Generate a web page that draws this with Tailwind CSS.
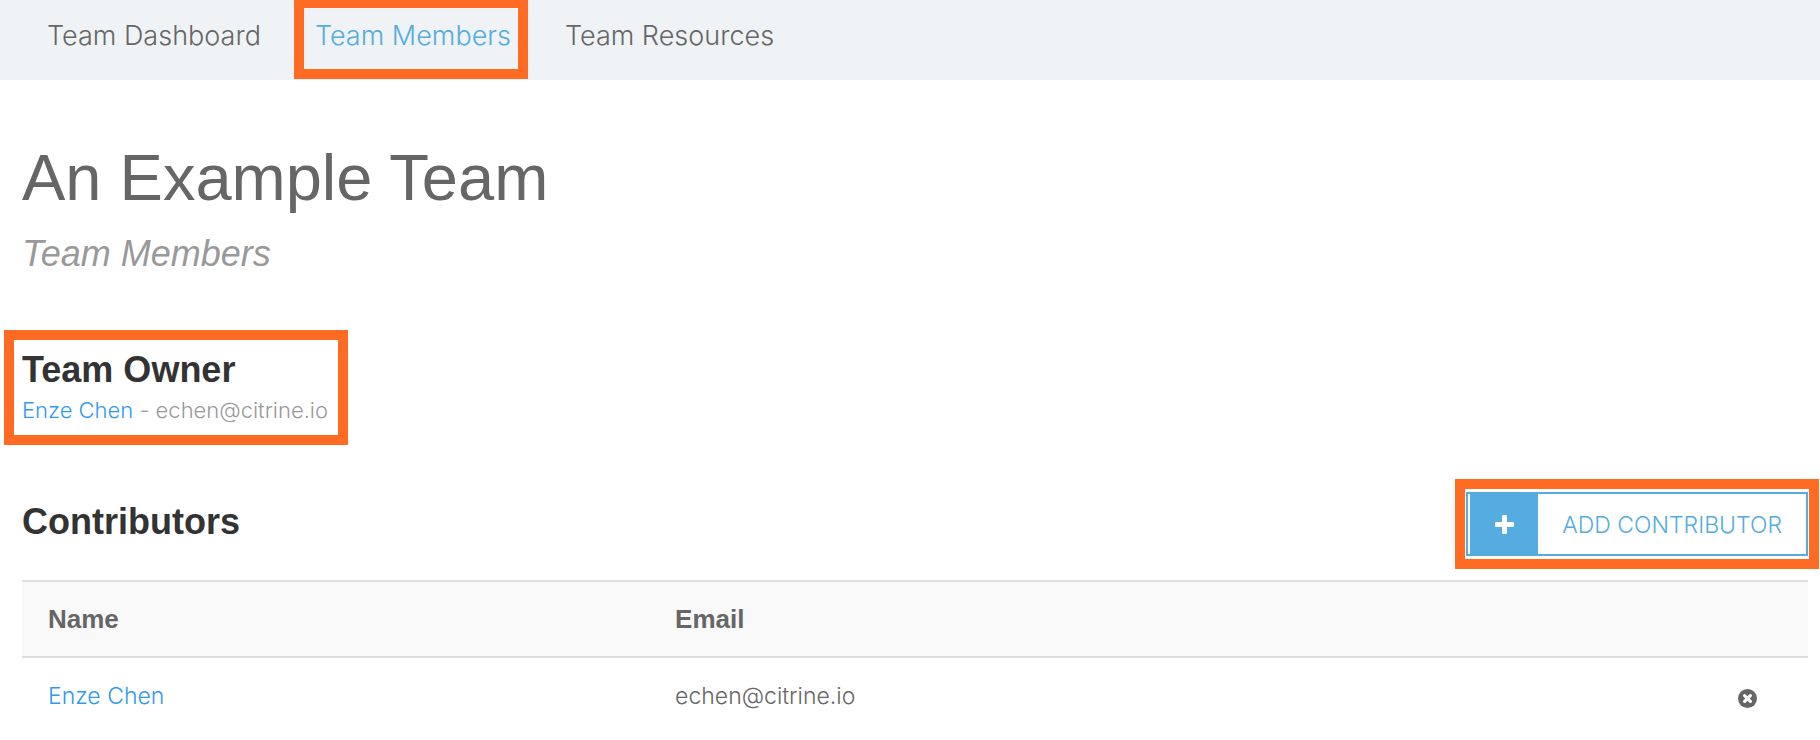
<!DOCTYPE html>
<html lang="en">
<head>
<meta charset="utf-8">
<meta name="viewport" content="width=device-width, initial-scale=1">
<title>An Example Team - Team Members</title>
<script src="https://cdn.jsdelivr.net/npm/@tailwindcss/browser@4"></script>
</head>
<body class="bg-white font-['Liberation_Sans',Arial,sans-serif] text-[#666] overflow-x-hidden">
<nav class="flex gap-[54px] bg-[#eff3f6] pl-[47px] pb-2 font-[Inter,sans-serif] font-light text-[27px] leading-[72px]">
  <a href="#dashboard">Team Dashboard</a>
  <a href="#members" aria-current="page" class="relative text-[#55acdf]">Team Members
    <span class="pointer-events-none absolute -top-0.5 -bottom-[7px] -left-[21px] -right-[17px] border-10 border-[#ff6b22]"></span>
  </a>
  <a href="#resources">Team Resources</a>
</nav>
<main class="pt-[58px] pl-[22px] pr-3">
  <h1 class="text-[65px] leading-20">An Example Team</h1>
  <p class="mt-3.5 text-4xl leading-11 italic text-[#999]">Team Members</p>

  <section class="relative mt-18 w-fit">
    <h2 class="text-4xl leading-11 font-bold text-[#333]">Team Owner</h2>
    <p class="mt-0.5 font-[Inter,sans-serif] font-light text-[22px] leading-8 text-[#999]"><a href="#enze" class="text-[#2f9af0]">Enze Chen</a> - echen@citrine.io</p>
    <span class="pointer-events-none absolute -top-[18px] -bottom-[19px] -left-[18px] -right-5 border-10 border-[#ff6b22]"></span>
  </section>

  <section class="mt-[66px]">
    <div class="flex items-center justify-between">
      <h2 class="pb-1 text-4xl leading-11 font-bold text-[#333]">Contributors</h2>
      <div class="relative">
        <button type="button" class="flex h-16 items-stretch border-2 border-[#55acdf] bg-white pl-0.5 font-[Inter,sans-serif] font-light text-[23px] text-[#55acdf]">
          <span class="flex w-17 items-center justify-center bg-[#55acdf]">
            <svg class="size-[19px]" viewBox="0 0 19 19" fill="#fff" aria-hidden="true"><path d="M8.3 0h2.4q1.3 0 1.3 1.3V7h5.7Q19 7 19 8.3v2.4q0 1.3-1.3 1.3H12v5.7q0 1.3-1.3 1.3H8.3Q7 19 7 17.7V12H1.3Q0 12 0 10.7V8.3Q0 7 1.3 7H7V1.3Q7 0 8.3 0z"/></svg>
          </span>
          <span class="self-center px-6 pt-0.5">ADD CONTRIBUTOR</span>
        </button>
        <span class="pointer-events-none absolute -inset-x-[11px] -inset-y-[13px] border-10 border-[#ff6b22]"></span>
      </div>
    </div>
    <table class="mt-6 w-full border-separate border-spacing-0 text-left">
      <thead>
        <tr class="bg-[#f9f9f9] text-[26px]">
          <th scope="col" class="h-[78px] w-[35%] border-y-2 border-[#ddd] pl-[26px]">Name</th>
          <th scope="col" class="border-y-2 border-[#ddd] pl-7">Email</th>
          <th scope="col" class="border-y-2 border-[#ddd]" aria-label="Actions"></th>
        </tr>
      </thead>
      <tbody>
        <tr class="font-[Inter,sans-serif] font-light text-[23px]">
          <td class="h-19 pl-[26px]"><a href="#enze" class="text-[#2f9af0]">Enze Chen</a></td>
          <td class="pl-7">echen@citrine.io</td>
          <td class="pr-[51px]">
            <button type="button" aria-label="Remove Enze Chen" class="ml-auto block pt-1">
              <svg class="size-[19px]" viewBox="0 0 19 19" aria-hidden="true"><circle cx="9.5" cy="9.5" r="9.5" fill="#666"/><path d="M6.6 6.600l5.800 5.800M12.400 6.600l-5.800 5.800" stroke="#fff" stroke-width="3.200" stroke-linecap="round"/></svg>
            </button>
          </td>
        </tr>
      </tbody>
    </table>
  </section>
</main>
</body>
</html>
